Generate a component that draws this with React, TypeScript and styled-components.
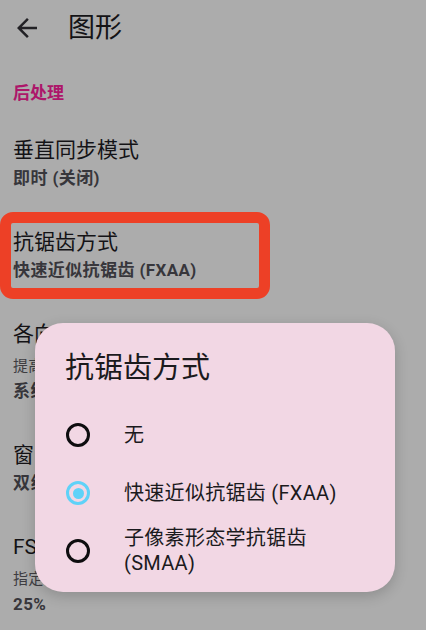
import React from 'react';
import styled, { createGlobalStyle, css } from 'styled-components';

const GlobalStyle = createGlobalStyle`
  html, body {
    margin: 0;
    padding: 0;
    background: #acacac;
  }
  body {
    font-family: Roboto, "Noto Sans CJK SC", "Noto Sans", sans-serif;
    -webkit-font-smoothing: antialiased;
  }
`;

const Screen = styled.div`
  position: relative;
  width: 426px;
  height: 630px;
  overflow: hidden;
  background: #acacac;
`;

const TopBar = styled.header`
  height: 56px;
  display: flex;
  align-items: center;
  padding-left: 12px;
  gap: 26px;
  color: #141316;
`;

const BackButton = styled.button`
  width: 30px;
  height: 30px;
  padding: 0;
  border: none;
  background: transparent;
  color: #222125;
  display: flex;
  align-items: center;
  justify-content: center;
`;

const Title = styled.h1`
  margin: 0;
  font-size: 27px;
  font-weight: 400;
  line-height: 34px;
  color: #141316;
`;

const SectionHeader = styled.div`
  margin: 25px 0 12px;
  padding: 0 13px;
  font-size: 17px;
  line-height: 24px;
  font-weight: 700;
  color: #ad166a;
`;

const List = styled.div`
  display: flex;
  flex-direction: column;
`;

const Item = styled.div<{ $highlighted?: boolean }>`
  position: relative;
  padding: 19px 13px;
  display: flex;
  flex-direction: column;
  white-space: nowrap;

  ${({ $highlighted }) =>
    $highlighted &&
    css`
      &::after {
        content: '';
        position: absolute;
        left: 0;
        top: 3px;
        bottom: 2px;
        width: 270px;
        box-sizing: border-box;
        border: 11px solid #ed4026;
        border-radius: 13px;
        pointer-events: none;
      }
    `}
`;

const ItemTitle = styled.div`
  font-size: 21px;
  line-height: 28px;
  color: #141316;
`;

const ItemDesc = styled.div`
  margin-top: 8px;
  font-size: 15px;
  line-height: 20px;
  letter-spacing: 0.3px;
  color: #3e3d42;
`;

const ItemValue = styled.div<{ $afterDesc?: boolean }>`
  margin-top: ${({ $afterDesc }) => ($afterDesc ? 3 : 2)}px;
  font-size: 17px;
  line-height: 24px;
  font-weight: 700;
  letter-spacing: 0.4px;
  color: #37363b;
`;

const Overlay = styled.div`
  position: absolute;
  inset: 0;
  padding: 323px 0 0 35px;
`;

const Dialog = styled.div`
  width: 360px;
  box-sizing: border-box;
  padding: 29px 40px 12px 0;
  background: #f2d7e4;
  border-radius: 28px;
  box-shadow: 0 4px 14px rgba(0, 0, 0, 0.18);
`;

const DialogTitle = styled.h2`
  margin: 0 0 22px 30px;
  font-size: 29px;
  line-height: 32px;
  font-weight: 400;
  color: #1b1a1d;
`;

const Option = styled.label`
  display: flex;
  align-items: center;
  gap: 34px;
  min-height: 58px;
  padding: 4px 0 4px 31px;
  box-sizing: border-box;
`;

const Radio = styled.span<{ $checked?: boolean }>`
  flex: none;
  width: 24px;
  height: 24px;
  box-sizing: border-box;
  border-radius: 50%;
  border: 3px solid ${({ $checked }) => ($checked ? '#5fd2f8' : '#0e0d0f')};
  display: flex;
  align-items: center;
  justify-content: center;

  &::after {
    content: '';
    width: 11px;
    height: 11px;
    border-radius: 50%;
    background: #5fd2f8;
    display: ${({ $checked }) => ($checked ? 'block' : 'none')};
  }
`;

const OptionLabel = styled.span`
  font-size: 20px;
  line-height: 25px;
  letter-spacing: 0.3px;
  color: #1b1a1d;
`;

const options = ['无', '快速近似抗锯齿 (FXAA)', '子像素形态学抗锯齿 (SMAA)'];

export default function App() {
  const selected = 1;

  return (
    <>
      <GlobalStyle />
      <Screen>
        <TopBar>
          <BackButton aria-label="返回">
            <svg width="30" height="30" viewBox="0 0 24 24" fill="currentColor">
              <path d="M20 11H7.83l5.59-5.59L12 4l-8 8 8 8 1.41-1.41L7.83 13H20v-2z" />
            </svg>
          </BackButton>
          <Title>图形</Title>
        </TopBar>

        <SectionHeader>后处理</SectionHeader>
        <List>
          <Item>
            <ItemTitle>垂直同步模式</ItemTitle>
            <ItemValue>即时 (关闭)</ItemValue>
          </Item>
          <Item $highlighted>
            <ItemTitle>抗锯齿方式</ItemTitle>
            <ItemValue>快速近似抗锯齿 (FXAA)</ItemValue>
          </Item>
          <Item>
            <ItemTitle>各向异性过滤</ItemTitle>
            <ItemDesc>提高斜角纹理的质量</ItemDesc>
            <ItemValue $afterDesc>系统默认</ItemValue>
          </Item>
          <Item>
            <ItemTitle>窗口适应过滤器</ItemTitle>
            <ItemValue>双线性过滤</ItemValue>
          </Item>
          <Item>
            <ItemTitle>FSR 锐化度</ItemTitle>
            <ItemDesc>指定使用 FSR 时图像锐化的程度</ItemDesc>
            <ItemValue $afterDesc>25%</ItemValue>
          </Item>
        </List>

        <Overlay>
          <Dialog role="dialog">
            <DialogTitle>抗锯齿方式</DialogTitle>
            {options.map((label, i) => (
              <Option key={label}>
                <Radio $checked={i === selected} />
                <OptionLabel>{label}</OptionLabel>
              </Option>
            ))}
          </Dialog>
        </Overlay>
      </Screen>
    </>
  );
}
